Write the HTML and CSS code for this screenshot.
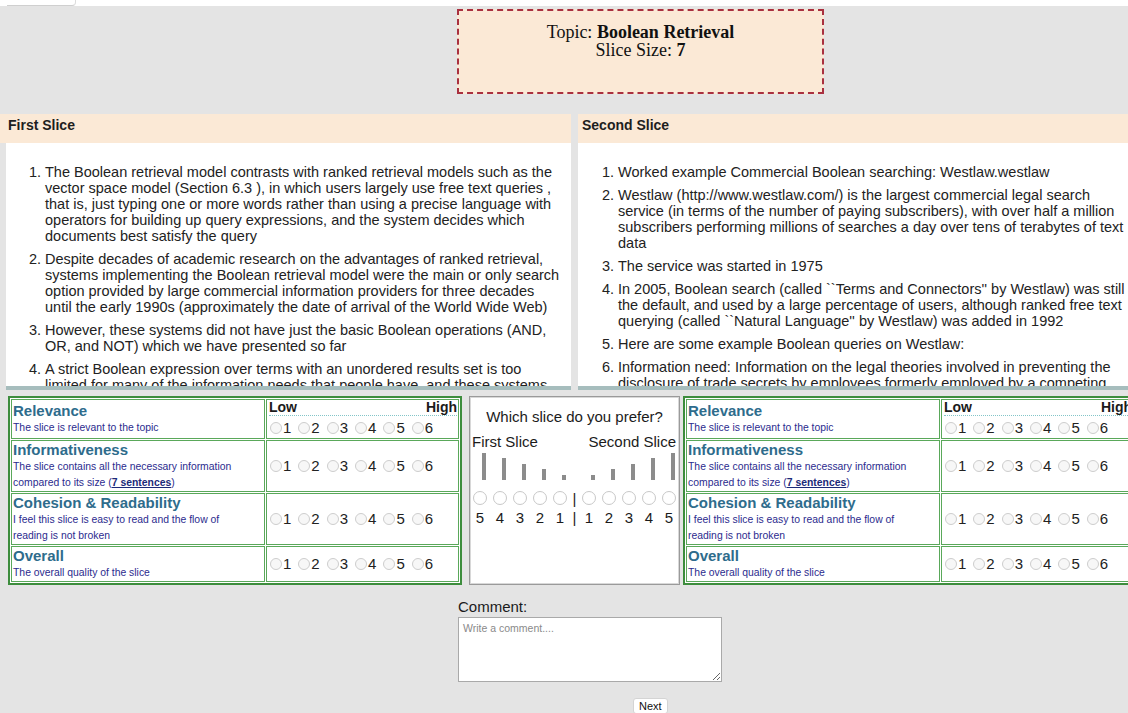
FILE: index.html
```html
<!DOCTYPE html>
<html lang="en">
<head>
<meta charset="utf-8">
<title>Slice comparison</title>
<link rel="stylesheet" href="styles.css">
</head>
<body>
<div class="page">
  <div class="topbar"><span class="tab"></span></div>

  <div class="topic-row">
    <div class="topic">
      <div>Topic: <b>Boolean Retrieval</b></div>
      <div>Slice Size: <b>7</b></div>
    </div>
  </div>

  <div class="slices">
    <section class="slice slice-first">
      <h3 class="slice-head">First Slice</h3>
      <div class="slice-body">
        <ol>
          <li>The Boolean retrieval model contrasts with ranked retrieval models such as the vector space model (Section 6.3 ), in which users largely use free text queries , that is, just typing one or more words rather than using a precise language with operators for building up query expressions, and the system decides which documents best satisfy the query</li>
          <li>Despite decades of academic research on the advantages of ranked retrieval, systems implementing the Boolean retrieval model were the main or only search option provided by large commercial information providers for three decades until the early 1990s (approximately the date of arrival of the World Wide Web)</li>
          <li>However, these systems did not have just the basic Boolean operations (AND, OR, and NOT) which we have presented so far</li>
          <li>A strict Boolean expression over terms with an unordered results set is too limited for many of the information needs that people have, and these systems implemented extended Boolean retrieval models by incorporating additional operators such as term proximity operators</li>
          <li>A proximity operator is a way of specifying that two terms in a query must occur close to each other in a document</li>
          <li>Closeness may be measured by limiting the allowed distance between terms in terms of the number of words</li>
          <li>Or closeness may be measured by reference to a structural unit such as a sentence or paragraph</li>
        </ol>
      </div>
    </section>
    <section class="slice slice-second">
      <h3 class="slice-head">Second Slice</h3>
      <div class="slice-body">
        <ol>
          <li>Worked example Commercial Boolean searching: Westlaw.westlaw</li>
          <li>Westlaw (http://www.westlaw.com/) is the largest commercial legal search service (in terms of the number of paying subscribers), with over half a million subscribers performing millions of searches a day over tens of terabytes of text data</li>
          <li>The service was started in 1975</li>
          <li>In 2005, Boolean search (called ``Terms and Connectors'' by Westlaw) was still the default, and used by a large percentage of users, although ranked free text querying (called ``Natural Language'' by Westlaw) was added in 1992</li>
          <li>Here are some example Boolean queries on Westlaw:</li>
          <li>Information need: Information on the legal theories involved in preventing the disclosure of trade secrets by employees formerly employed by a competing company</li>
          <li>Query: "trade secret" /s disclos! /s prevent /s employe!</li>
        </ol>
      </div>
    </section>
  </div>

  <div class="ratings">
    <table class="scale">
      <tr class="row-short">
        <td class="crit">
          <div class="crit-name">Relevance</div>
          <div class="crit-desc">The slice is relevant to the topic</div>
        </td>
        <td class="pick">
          <div class="pick-ends"><span>Low</span><span>High</span></div>
          <div class="pick-opts">
            <label><input type="radio" name="a-rel">1</label>
            <label><input type="radio" name="a-rel">2</label>
            <label><input type="radio" name="a-rel">3</label>
            <label><input type="radio" name="a-rel">4</label>
            <label><input type="radio" name="a-rel">5</label>
            <label><input type="radio" name="a-rel">6</label>
          </div>
        </td>
      </tr>
      <tr class="row-tall">
        <td class="crit">
          <div class="crit-name">Informativeness</div>
          <div class="crit-desc">The slice contains all the necessary information compared to its size (<a href="#">7 sentences</a>)</div>
        </td>
        <td class="pick">
          <div class="pick-opts">
            <label><input type="radio" name="a-inf">1</label>
            <label><input type="radio" name="a-inf">2</label>
            <label><input type="radio" name="a-inf">3</label>
            <label><input type="radio" name="a-inf">4</label>
            <label><input type="radio" name="a-inf">5</label>
            <label><input type="radio" name="a-inf">6</label>
          </div>
        </td>
      </tr>
      <tr class="row-tall">
        <td class="crit">
          <div class="crit-name">Cohesion &amp; Readability</div>
          <div class="crit-desc">I feel this slice is easy to read and the flow of reading is not broken</div>
        </td>
        <td class="pick">
          <div class="pick-opts">
            <label><input type="radio" name="a-coh">1</label>
            <label><input type="radio" name="a-coh">2</label>
            <label><input type="radio" name="a-coh">3</label>
            <label><input type="radio" name="a-coh">4</label>
            <label><input type="radio" name="a-coh">5</label>
            <label><input type="radio" name="a-coh">6</label>
          </div>
        </td>
      </tr>
      <tr class="row-low">
        <td class="crit">
          <div class="crit-name">Overall</div>
          <div class="crit-desc">The overall quality of the slice</div>
        </td>
        <td class="pick">
          <div class="pick-opts">
            <label><input type="radio" name="a-all">1</label>
            <label><input type="radio" name="a-all">2</label>
            <label><input type="radio" name="a-all">3</label>
            <label><input type="radio" name="a-all">4</label>
            <label><input type="radio" name="a-all">5</label>
            <label><input type="radio" name="a-all">6</label>
          </div>
        </td>
      </tr>
    </table>

    <div class="prefer">
      <div class="prefer-q">Which slice do you prefer?</div>
      <div class="prefer-ends"><span>First Slice</span><span>Second Slice</span></div>
      <div class="prefer-grid prefer-bars">
        <span class="cell"><i style="height:27px"></i></span>
        <span class="cell"><i style="height:22px"></i></span>
        <span class="cell"><i style="height:16px"></i></span>
        <span class="cell"><i style="height:11px"></i></span>
        <span class="cell"><i style="height:5px"></i></span>
        <span class="cell"></span>
        <span class="cell"><i style="height:5px"></i></span>
        <span class="cell"><i style="height:11px"></i></span>
        <span class="cell"><i style="height:16px"></i></span>
        <span class="cell"><i style="height:22px"></i></span>
        <span class="cell"><i style="height:27px"></i></span>
      </div>
      <div class="prefer-grid prefer-radios">
        <span class="cell"><input type="radio" name="pref"></span>
        <span class="cell"><input type="radio" name="pref"></span>
        <span class="cell"><input type="radio" name="pref"></span>
        <span class="cell"><input type="radio" name="pref"></span>
        <span class="cell"><input type="radio" name="pref"></span>
        <span class="cell">|</span>
        <span class="cell"><input type="radio" name="pref"></span>
        <span class="cell"><input type="radio" name="pref"></span>
        <span class="cell"><input type="radio" name="pref"></span>
        <span class="cell"><input type="radio" name="pref"></span>
        <span class="cell"><input type="radio" name="pref"></span>
      </div>
      <div class="prefer-grid prefer-nums">
        <span class="cell">5</span>
        <span class="cell">4</span>
        <span class="cell">3</span>
        <span class="cell">2</span>
        <span class="cell">1</span>
        <span class="cell">|</span>
        <span class="cell">1</span>
        <span class="cell">2</span>
        <span class="cell">3</span>
        <span class="cell">4</span>
        <span class="cell">5</span>
      </div>
    </div>

    <table class="scale scale-right">
      <tr class="row-short">
        <td class="crit">
          <div class="crit-name">Relevance</div>
          <div class="crit-desc">The slice is relevant to the topic</div>
        </td>
        <td class="pick">
          <div class="pick-ends"><span>Low</span><span>High</span></div>
          <div class="pick-opts">
            <label><input type="radio" name="b-rel">1</label>
            <label><input type="radio" name="b-rel">2</label>
            <label><input type="radio" name="b-rel">3</label>
            <label><input type="radio" name="b-rel">4</label>
            <label><input type="radio" name="b-rel">5</label>
            <label><input type="radio" name="b-rel">6</label>
          </div>
        </td>
      </tr>
      <tr class="row-tall">
        <td class="crit">
          <div class="crit-name">Informativeness</div>
          <div class="crit-desc">The slice contains all the necessary information compared to its size (<a href="#">7 sentences</a>)</div>
        </td>
        <td class="pick">
          <div class="pick-opts">
            <label><input type="radio" name="b-inf">1</label>
            <label><input type="radio" name="b-inf">2</label>
            <label><input type="radio" name="b-inf">3</label>
            <label><input type="radio" name="b-inf">4</label>
            <label><input type="radio" name="b-inf">5</label>
            <label><input type="radio" name="b-inf">6</label>
          </div>
        </td>
      </tr>
      <tr class="row-tall">
        <td class="crit">
          <div class="crit-name">Cohesion &amp; Readability</div>
          <div class="crit-desc">I feel this slice is easy to read and the flow of reading is not broken</div>
        </td>
        <td class="pick">
          <div class="pick-opts">
            <label><input type="radio" name="b-coh">1</label>
            <label><input type="radio" name="b-coh">2</label>
            <label><input type="radio" name="b-coh">3</label>
            <label><input type="radio" name="b-coh">4</label>
            <label><input type="radio" name="b-coh">5</label>
            <label><input type="radio" name="b-coh">6</label>
          </div>
        </td>
      </tr>
      <tr class="row-low">
        <td class="crit">
          <div class="crit-name">Overall</div>
          <div class="crit-desc">The overall quality of the slice</div>
        </td>
        <td class="pick">
          <div class="pick-opts">
            <label><input type="radio" name="b-all">1</label>
            <label><input type="radio" name="b-all">2</label>
            <label><input type="radio" name="b-all">3</label>
            <label><input type="radio" name="b-all">4</label>
            <label><input type="radio" name="b-all">5</label>
            <label><input type="radio" name="b-all">6</label>
          </div>
        </td>
      </tr>
    </table>
  </div>

  <div class="comment">
    <label class="comment-label" for="comment">Comment:</label>
    <textarea id="comment" class="comment-box" placeholder="Write a comment...."></textarea>
  </div>

  <div class="actions">
    <button class="next-btn" type="button">Next</button>
  </div>
</div>
</body>
</html>
```

FILE: styles.css
```css
html {
  overflow: hidden;
}

body {
  margin: 0;
  background: #e4e4e4;
  color: #222;
  font-family: "Liberation Sans", Arial, Helvetica, sans-serif;
}

.page {
  width: 1146px;
}

/* thin white strip along the top edge */
.topbar {
  height: 6px;
  background: #fff;
  padding-left: 7px;
}

.topbar .tab {
  display: block;
  width: 68px;
  height: 5px;
  border-bottom: 1px solid #cfcfcf;
  border-right: 1px solid #dcdcdc;
  border-bottom-right-radius: 4px;
}

/* topic banner */
.topic-row {
  padding-top: 3px;
}

.topic {
  box-sizing: border-box;
  margin-left: 457px;
  width: 367px;
  height: 85px;
  padding-top: 12px;
  border: 2px dashed #a9303f;
  background: #fbe9d6;
  text-align: center;
  font-family: "Liberation Serif", "Times New Roman", serif;
  font-size: 18px;
  line-height: 18px;
  color: #111;
}

/* the two slices side by side */
.slices {
  margin-top: 20px;
  display: grid;
  grid-template-columns: 571px 568px;
  column-gap: 7px;
}

.slice-head {
  margin: 0;
  height: 29px;
  box-sizing: border-box;
  padding: 3px 4px;
  background: #fbe9d6;
  font-size: 14px;
  line-height: 17px;
  font-weight: bold;
  color: #1e1e1e;
}

.slice-first .slice-head {
  padding-left: 8px;
}

.slice-body {
  height: 243px;
  overflow: hidden;
  background: #fff;
  border-bottom: 4px solid #a6bdbd;
}

.slice-first .slice-body {
  margin-left: 6px;
}

.slice-body ol {
  margin: 0;
  padding: 21px 10px 0 39px;
  font-size: 14.5px;
  line-height: 16px;
  color: #222;
}

.slice-second .slice-body ol {
  padding-left: 40px;
  padding-right: 16px;
}

.slice-body li {
  margin-bottom: 7px;
}

/* rating area */
.ratings {
  margin-top: 6px;
  display: flex;
  align-items: flex-start;
  padding-left: 8px;
}

.scale {
  width: 454px;
  border: 2px solid #3d8d3d;
  border-spacing: 1px;
  background: #fff;
}

.scale td {
  border: 1px solid #5aa85a;
  padding: 0;
  vertical-align: middle;
}

.row-short td { height: 38px; }
.row-tall td { height: 50px; }
.row-low td { height: 34px; }

.crit {
  width: 251px;
  padding-left: 1px !important;
}

.crit-name {
  font-size: 15px;
  line-height: 18px;
  font-weight: bold;
  color: #2e6c8c;
}

.crit-desc {
  max-width: 240px;
  font-size: 10.4px;
  line-height: 16px;
  color: #2b2b8e;
}

.crit-desc a {
  color: #1b2a78;
  font-weight: bold;
}

.pick {
  padding: 0 1px 0 2px !important;
}

.row-short .pick {
  vertical-align: top;
}

.pick-ends {
  display: flex;
  justify-content: space-between;
  font-size: 14px;
  line-height: 14px;
  font-weight: bold;
  color: #1b1b1b;
  border-bottom: 1px dotted #83c5c8;
  padding-bottom: 1px;
}

.pick-opts {
  display: flex;
  gap: 6px;
  font-size: 15px;
  line-height: 20px;
  color: #222;
}

.row-short .pick-opts {
  padding-top: 2px;
}

.pick-opts label {
  display: inline-flex;
  align-items: center;
}

.pick-opts input {
  appearance: none;
  -webkit-appearance: none;
  width: 12px;
  height: 12px;
  margin: 0 1px;
  border: 1px solid #cdcdcd;
  border-radius: 50%;
  background: #f7f7f7;
}

.scale-right {
  margin-left: 3px;
}

/* preference box in the middle */
.prefer {
  box-sizing: border-box;
  margin-left: 7px;
  width: 211px;
  height: 189px;
  border: 1px solid #9a9a9a;
  box-shadow: inset 0 0 0 1px #d8d8d8;
  background: #fff;
  color: #1b1b1b;
  font-size: 15px;
}

.prefer-q {
  padding-top: 11px;
  line-height: 18px;
  text-align: center;
}

.prefer-ends {
  display: flex;
  justify-content: space-between;
  padding: 7px 3px 0 2px;
  line-height: 17px;
}

.prefer-grid {
  display: grid;
  grid-template-columns: repeat(5, 20px) 9px repeat(5, 20px);
}

.prefer-bars {
  margin-top: 3px;
  height: 27px;
  align-items: end;
}

.prefer-bars .cell {
  display: flex;
  align-items: flex-end;
  height: 27px;
  padding-left: 12px;
}

.prefer-bars i {
  display: block;
  width: 4px;
  background: #8c8c8c;
}

.prefer-radios {
  margin-top: 8px;
  height: 20px;
}

.prefer-radios .cell,
.prefer-nums .cell {
  display: flex;
  align-items: center;
  justify-content: center;
}

.prefer-radios input {
  appearance: none;
  -webkit-appearance: none;
  width: 14px;
  height: 14px;
  margin: 0;
  border: 1px solid #c8c8c8;
  border-radius: 50%;
  background: #fff;
}

.prefer-nums {
  margin-top: 1px;
  line-height: 18px;
}

/* comment and submit */
.comment {
  margin: 13px 0 0 458px;
}

.comment-label {
  display: block;
  font-size: 15px;
  line-height: 17px;
  color: #1b1b1b;
}

.comment-box {
  display: block;
  box-sizing: border-box;
  margin-top: 2px;
  width: 264px;
  height: 65px;
  padding: 4px;
  border: 1px solid #a9a9a9;
  background: #fff;
  font-family: "Liberation Sans", Arial, sans-serif;
  font-size: 10.5px;
}

.comment-box::placeholder {
  color: #8a8a8a;
}

.actions {
  margin-top: 14px;
  padding-left: 633px;
}

.next-btn {
  height: 16px;
  padding: 0 5px;
  border: 1px solid #d4d4d4;
  border-radius: 3px;
  background: #fff;
  font-family: "Liberation Sans", Arial, sans-serif;
  font-size: 11px;
  line-height: 14px;
  color: #111;
}
```
